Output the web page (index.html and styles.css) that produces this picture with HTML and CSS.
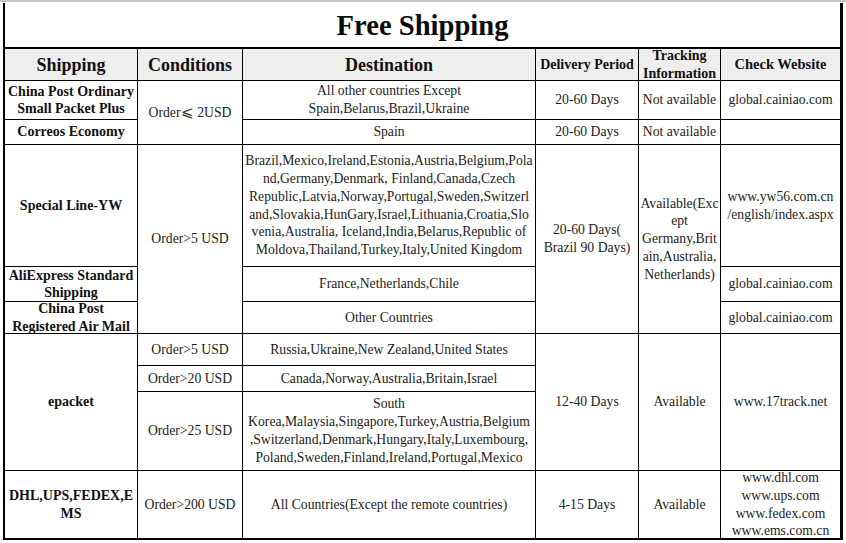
FILE: index.html
```html
<!DOCTYPE html>
<html>
<head>
<meta charset="utf-8">
<title>Free Shipping</title>
<link rel="stylesheet" href="styles.css">
</head>
<body>
<div class="topline"></div>
<div class="sheet">
  <div class="title">Free Shipping</div>
  <div class="grid">
    <div class="c h">Shipping</div>
    <div class="c h">Conditions</div>
    <div class="c h">Destination</div>
    <div class="c h sm">Delivery Period</div>
    <div class="c h sm">Tracking<br>Information</div>
    <div class="c h sm wide">Check Website</div>

    <div class="c n">China Post Ordinary<br>Small Packet Plus</div>
    <div class="c r2">Order<span class="le">⩽</span> 2USD</div>
    <div class="c">All other countries Except<br>Spain,Belarus,Brazil,Ukraine</div>
    <div class="c">20-60 Days</div>
    <div class="c">Not available</div>
    <div class="c">global.cainiao.com</div>

    <div class="c n">Correos Economy</div>
    <div class="c">Spain</div>
    <div class="c">20-60 Days</div>
    <div class="c">Not available</div>
    <div class="c"></div>

    <div class="c n">Special Line-YW</div>
    <div class="c r3">Order&gt;5 USD</div>
    <div class="c">Brazil,Mexico,Ireland,Estonia,Austria,Belgium,Pola<br>nd,Germany,Denmark, Finland,Canada,Czech<br>Republic,Latvia,Norway,Portugal,Sweden,Switzerl<br>and,Slovakia,HunGary,Israel,Lithuania,Croatia,Slo<br>venia,Australia, Iceland,India,Belarus,Republic of<br>Moldova,Thailand,Turkey,Italy,United Kingdom</div>
    <div class="c r3">20-60 Days(<br>Brazil 90 Days)</div>
    <div class="c r3">Available(Exc<br>ept<br>Germany,Brit<br>ain,Australia,<br>Netherlands)</div>
    <div class="c">www.yw56.com.cn<br>/english/index.aspx</div>

    <div class="c n">AliExpress Standard<br>Shipping</div>
    <div class="c">France,Netherlands,Chile</div>
    <div class="c">global.cainiao.com</div>

    <div class="c n">China Post<br>Registered Air Mail</div>
    <div class="c">Other Countries</div>
    <div class="c">global.cainiao.com</div>

    <div class="c n r3">epacket</div>
    <div class="c">Order&gt;5 USD</div>
    <div class="c">Russia,Ukraine,New Zealand,United States</div>
    <div class="c r3">12-40 Days</div>
    <div class="c r3">Available</div>
    <div class="c r3">www.17track.net</div>

    <div class="c">Order&gt;20 USD</div>
    <div class="c">Canada,Norway,Australia,Britain,Israel</div>

    <div class="c">Order&gt;25 USD</div>
    <div class="c">South<br>Korea,Malaysia,Singapore,Turkey,Austria,Belgium<br>,Switzerland,Denmark,Hungary,Italy,Luxembourg,<br>Poland,Sweden,Finland,Ireland,Portugal,Mexico</div>

    <div class="c n">DHL,UPS,FEDEX,E<br>MS</div>
    <div class="c">Order&gt;200 USD</div>
    <div class="c">All Countries(Except the remote countries)</div>
    <div class="c">4-15 Days</div>
    <div class="c">Available</div>
    <div class="c clip">www.dhl.com<br>www.ups.com<br>www.fedex.com<br>www.ems.com.cn</div>
  </div>
</div>
</body>
</html>
```
FILE: styles.css
```css
html, body {
  margin: 0;
  padding: 0;
  background: #ffffff;
}

body {
  font-family: "Liberation Serif", "Times New Roman", serif;
  color: #1c1c1c;
}

.topline {
  height: 2px;
  margin-bottom: 1px;
  background: #c4c4c4;
}

.sheet {
  margin-left: 3px;
  width: 840px;
  box-sizing: border-box;
  border-left: 2px solid #000;
  border-right: 3px solid #000;
  border-bottom: 2px solid #000;
}

.title {
  height: 46px;
  box-sizing: border-box;
  padding-top: 3px;
  border-bottom: 2px solid #000;
  display: flex;
  align-items: center;
  justify-content: center;
  font-weight: bold;
  font-size: 28.6px;
  line-height: 28.6px;
  color: #0a0a0a;
}

.grid {
  display: grid;
  grid-template-columns: 132px 104px 292px 102px 81px 119px;
  grid-template-rows: 31px 38px 24px 121px 34px 31px 31px 25px 78px 67px;
  gap: 1px;
  background: #000;
}

.c {
  background: #fff;
  display: flex;
  align-items: center;
  justify-content: center;
  text-align: center;
  font-size: 13.7px;
  line-height: 17.8px;
  white-space: nowrap;
}

.r2 { grid-row: span 2; }
.r3 { grid-row: span 3; }

.h {
  background: #eeeeee;
  font-weight: bold;
  font-size: 18px;
  line-height: 20px;
  color: #111;
}

.h.sm {
  font-size: 14px;
  line-height: 17.5px;
}

.h.wide {
  font-size: 14.5px;
}

.n {
  font-weight: bold;
  font-size: 14px;
  line-height: 17.5px;
  color: #111;
}

.le {
  display: inline-block;
  width: 13.7px;
  margin-right: 3px;
  text-align: center;
  font-family: "DejaVu Sans", sans-serif;
  font-size: 15px;
  line-height: 17px;
  color: #333;
}

.clip {
  overflow: hidden;
}
```
